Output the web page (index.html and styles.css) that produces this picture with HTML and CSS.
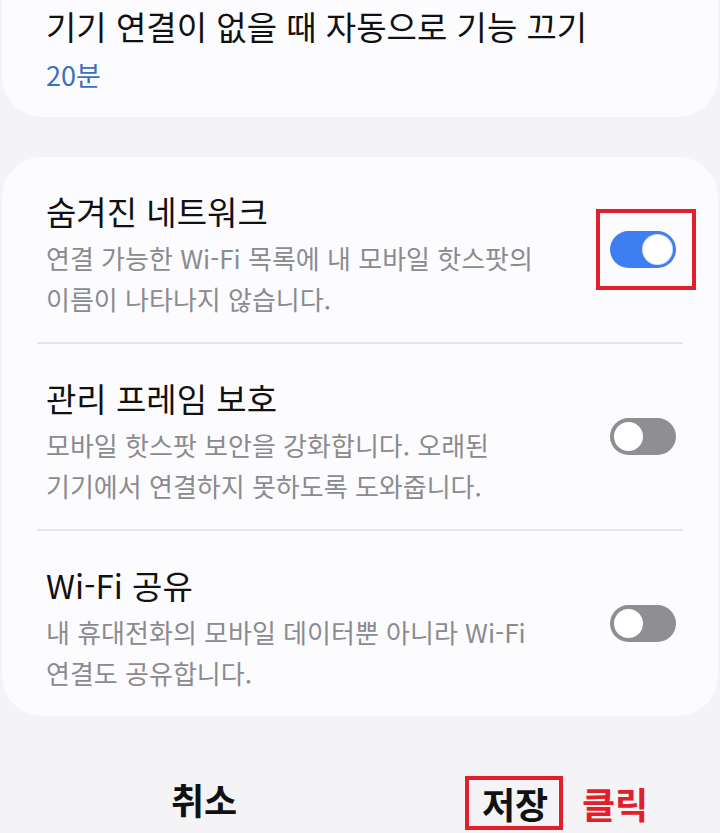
FILE: index.html
```html
<!DOCTYPE html>
<html lang="ko">
<head>
    <meta charset="UTF-8">
    <meta name="viewport" content="width=device-width, initial-scale=1.0">
    <title>모바일 핫스팟 설정</title>
    <link rel="stylesheet" href="styles.css">
</head>
<body>
    <div class="card card-top">
        <div class="title">기기 연결이 없을 때 자동으로 기능 끄기</div>
        <div class="value">20분</div>
    </div>

    <div class="card">
        <div class="row">
            <div class="row-text">
                <div class="title">숨겨진 네트워크</div>
                <div class="desc">연결 가능한 Wi-Fi 목록에 내 모바일 핫스팟의<br>이름이 나타나지 않습니다.</div>
            </div>
            <span class="switch on marked"><span class="knob"></span></span>
        </div>
        <div class="divider"></div>
        <div class="row">
            <div class="row-text">
                <div class="title">관리 프레임 보호</div>
                <div class="desc">모바일 핫스팟 보안을 강화합니다. 오래된<br>기기에서 연결하지 못하도록 도와줍니다.</div>
            </div>
            <span class="switch"><span class="knob"></span></span>
        </div>
        <div class="divider"></div>
        <div class="row">
            <div class="row-text">
                <div class="title">Wi-Fi 공유</div>
                <div class="desc">내 휴대전화의 모바일 데이터뿐 아니라 Wi-Fi<br>연결도 공유합니다.</div>
            </div>
            <span class="switch"><span class="knob"></span></span>
        </div>
    </div>

    <div class="actions">
        <div class="action"><span class="btn">취소</span></div>
        <div class="action"><span class="btn btn-save">저장<span class="note">클릭</span></span></div>
    </div>
</body>
</html>
```

FILE: styles.css
```css
body {
    font-family: "Noto Sans CJK KR", "Noto Sans", sans-serif;
    margin: 0;
    padding: 0 2px;
    background-color: #f4f4f6;
    color: #111;
    overflow: hidden;
}

.card {
    background-color: #fcfcfe;
    border-radius: 40px;
}

.card-top {
    border-radius: 0 0 40px 40px;
    padding: 4px 44px 25px;
    margin-bottom: 40px;
}

.title {
    font-size: 33px;
    line-height: 44px;
}

.value {
    margin-top: 10px;
    font-size: 27px;
    line-height: 34px;
    color: #3a6fc6;
}

.row {
    display: flex;
    align-items: center;
    justify-content: space-between;
    padding: 32px 42px 23px 44px;
}

.desc {
    margin-top: 4px;
    font-size: 26px;
    line-height: 41px;
    color: #8b8b8f;
}

.divider {
    height: 2px;
    margin: 0 35px;
    background-color: #e6e6e8;
}

/* toggle switch */
.switch {
    position: relative;
    flex-shrink: 0;
    width: 66px;
    height: 37px;
    margin-bottom: 9px;
    border-radius: 19px;
    background-color: #8f8f93;
}

.switch .knob {
    position: absolute;
    top: 4px;
    left: 4px;
    width: 29px;
    height: 29px;
    border-radius: 50%;
    background-color: #fff;
}

.switch.on {
    background-color: #3e7ef3;
}

.switch.on .knob {
    left: auto;
    right: 4px;
    box-shadow: 0 0 0 1px #d6e2f8;
}

/* red annotation boxes */
.marked::after {
    content: "";
    position: absolute;
    top: -22px;
    left: -14px;
    right: -20px;
    bottom: -22px;
    border: 4px solid #e2202b;
}

.actions {
    display: flex;
    padding: 0 46px;
    margin-top: 60px;
}

.action {
    flex: 1;
    display: flex;
    justify-content: center;
}

.btn {
    position: relative;
    font-size: 36px;
    font-weight: bold;
    line-height: 46px;
}

.btn-save {
    border: 4px solid #e2202b;
    padding: 0 11px 0 13px;
    margin-left: -4px;
}

.note {
    position: absolute;
    left: 113px;
    top: 0;
    color: #e2202b;
    white-space: nowrap;
}
```
